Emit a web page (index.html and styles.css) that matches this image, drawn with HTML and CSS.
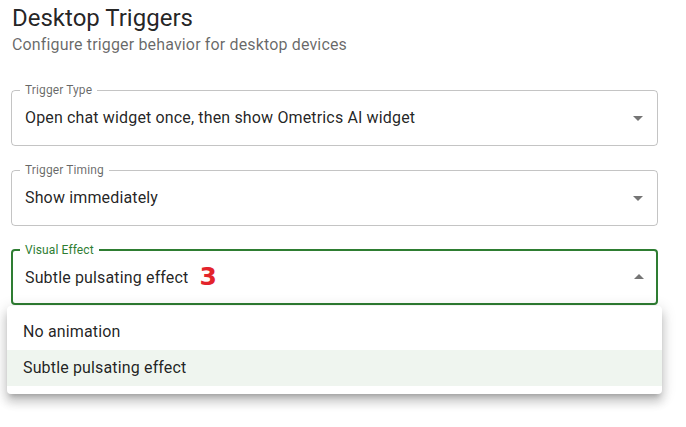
FILE: index.html
```html
<!DOCTYPE html>
<html>
<head>
<meta charset="utf-8">
<link rel="stylesheet" href="styles.css">
</head>
<body>
<div class="page">
  <h1 class="title">Desktop Triggers</h1>
  <p class="subtitle">Configure trigger behavior for desktop devices</p>

  <fieldset class="field">
    <legend class="label">Trigger Type</legend>
    <div class="row">
      <span class="value">Open chat widget once, then show Ometrics AI widget</span>
      <svg class="arrow" viewBox="0 0 24 24" width="24" height="24"><path d="M7 10l5 5 5-5z"/></svg>
    </div>
  </fieldset>

  <fieldset class="field">
    <legend class="label">Trigger Timing</legend>
    <div class="row">
      <span class="value">Show immediately</span>
      <svg class="arrow" viewBox="0 0 24 24" width="24" height="24"><path d="M7 10l5 5 5-5z"/></svg>
    </div>
  </fieldset>

  <fieldset class="field focused">
    <legend class="label">Visual Effect</legend>
    <div class="row">
      <span class="value">Subtle pulsating effect<span class="marker">3</span></span>
      <svg class="arrow" viewBox="0 0 24 24" width="24" height="24"><path d="M7 14l5-5 5 5z"/></svg>
    </div>
  </fieldset>
</div>

<ul class="menu">
  <li class="item">No animation</li>
  <li class="item selected">Subtle pulsating effect</li>
</ul>
</body>
</html>
```

FILE: styles.css
```css
html, body {
  margin: 0;
  padding: 0;
  background: #ffffff;
}

body {
  font-family: Roboto, "Liberation Sans", sans-serif;
  color: rgba(0, 0, 0, 0.87);
  width: 686px;
  height: 427px;
  overflow: hidden;
  position: relative;
}

.page {
  width: 647px;
  margin-left: 11px;
  padding-top: 2px;
}

.title {
  margin: 0 0 0 1px;
  font-size: 24px;
  font-weight: 400;
  line-height: 32px;
  color: rgba(0, 0, 0, 0.87);
}

.subtitle {
  margin: -1px 0 0 1px;
  font-size: 16px;
  line-height: 24px;
  letter-spacing: 0.15px;
  color: rgba(0, 0, 0, 0.6);
}

.field {
  margin: 27px 0 0 0;
  padding: 0 8px;
  border: 1px solid rgba(0, 0, 0, 0.23);
  border-radius: 4px;
  min-width: 0;
  box-sizing: border-box;
}

.field + .field {
  margin-top: 18px;
}

.label {
  padding: 0 5px;
  font-size: 12px;
  line-height: 12px;
  letter-spacing: 0.11px;
  color: rgba(0, 0, 0, 0.6);
}

.row {
  display: flex;
  align-items: center;
  justify-content: space-between;
  height: 49px;
  padding-bottom: 5px;
  box-sizing: border-box;
}

.value {
  margin-left: 5px;
  font-size: 16px;
  line-height: 24px;
  letter-spacing: 0.15px;
  color: rgba(0, 0, 0, 0.87);
}

.arrow {
  fill: rgba(0, 0, 0, 0.54);
  margin-right: -1px;
}

.focused {
  border: 2px solid #2e7d32;
  padding: 0 7px;
}

.focused .label {
  color: #2e7d32;
}

.focused .row {
  height: 47px;
}

.focused .arrow {
  margin-right: -2px;
}

.marker {
  margin-left: 11px;
  font-family: "DejaVu Sans", sans-serif;
  font-weight: 700;
  font-size: 25px;
  line-height: 24px;
  letter-spacing: 0;
  color: #e3232b;
  vertical-align: -2px;
}

.menu {
  position: absolute;
  left: 7px;
  top: 306px;
  width: 655px;
  margin: 0;
  padding: 8px 0;
  list-style: none;
  background: #ffffff;
  border-radius: 4px;
  box-shadow: 0px 5px 5px -3px rgba(0, 0, 0, 0.2),
              0px 8px 10px 1px rgba(0, 0, 0, 0.14),
              0px 3px 14px 2px rgba(0, 0, 0, 0.12);
}

.item {
  padding: 6px 16px;
  font-size: 16px;
  line-height: 24px;
  letter-spacing: 0.15px;
  color: rgba(0, 0, 0, 0.87);
}

.selected {
  background: rgba(46, 125, 50, 0.08);
}
```
